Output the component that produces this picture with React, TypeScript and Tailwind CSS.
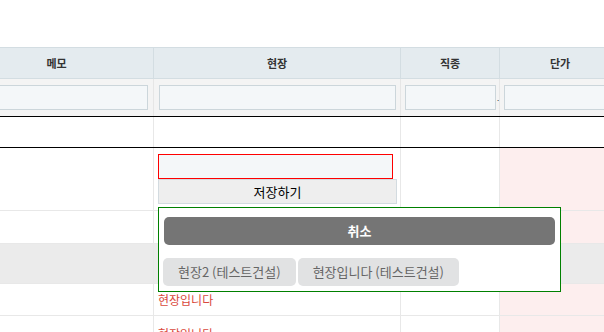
import React, { FC } from "react";

const c1 = "w-[194px] shrink-0 border-r";
const c2 = "w-[247px] shrink-0 border-r";
const c3 = "w-[99px] shrink-0 border-r";
const c4 = "w-[120px] shrink-0";

const FilterInput: FC<{ w: string }> = ({ w }) => (
  <input className={`${w} h-[25px] border border-[#ccd6db] bg-[#f4f7f9] outline-none`} />
);

const SiteText: FC = () => (
  <span className="text-[12px] text-[#d9493c] leading-none">현장입니다</span>
);

const App: FC = () => {
  const sites = ["현장2 (테스트건설)", "현장입니다 (테스트건설)"];

  return (
    <div className="w-[604px] h-[332px] overflow-hidden bg-white font-['Noto_Sans_CJK_KR',sans-serif] text-[#333]">
      <div className="pt-[47px] -ml-[40px] w-[660px]">
        {/* header */}
        <div className="flex h-[32px] border-y border-[#d3dde2] bg-[#e4ebef] text-[11px] font-bold">
          <div className={`${c1} border-[#d3dde2] flex items-center justify-center`}>메모</div>
          <div className={`${c2} border-[#d3dde2] flex items-center justify-center`}>현장</div>
          <div className={`${c3} border-[#d3dde2] flex items-center justify-center`}>직종</div>
          <div className={`${c4} flex items-center justify-center`}>단가</div>
        </div>

        {/* filters */}
        <div className="flex h-[38px] border-b border-black bg-[#f4f4f4]">
          <div className={`${c1} border-[#e6e6e6] flex items-center justify-end pr-[5px]`}>
            <FilterInput w="w-[180px]" />
          </div>
          <div className={`${c2} border-[#e6e6e6] flex items-center pl-[5px]`}>
            <FilterInput w="w-[237px]" />
          </div>
          <div className={`${c3} border-[#e6e6e6] flex items-center pl-[4px]`}>
            <FilterInput w="w-[91px]" />
            <span className="text-[8px] leading-none ml-[1px] mt-[1px]">.</span>
          </div>
          <div className={`${c4} flex items-center pl-[4px]`}>
            <FilterInput w="w-[112px]" />
          </div>
        </div>

        {/* empty row */}
        <div className="flex h-[31px] border-b border-black">
          <div className={`${c1} border-[#e8e8e8]`} />
          <div className={`${c2} border-[#e8e8e8]`} />
          <div className={`${c3} border-[#e8e8e8]`} />
          <div className={c4} />
        </div>

        {/* row 1: editing */}
        <div className="flex h-[63px] border-b border-[#e8e8e8]">
          <div className={`${c1} border-[#e8e8e8]`} />
          <div className={`${c2} border-[#e8e8e8] relative flex flex-col justify-center pl-[4px]`}>
            <input className="w-[235px] h-[25px] border border-[#ff0000] bg-[#f4f7f9] outline-none" />
            <button className="w-[239px] h-[25px] border border-[#d3dbe0] bg-[#eeeeee] text-[13px] text-black">
              저장하기
            </button>
            <div className="absolute z-10 left-[4px] top-[59px] w-[403px] border border-[#008000] bg-white pt-[9px] px-[5px] pb-[5px]">
              <button className="w-full h-[28px] rounded-[5px] bg-[#757575] text-white text-[13px] font-bold">
                취소
              </button>
              <div className="flex gap-[2px] -ml-[1px] mt-[13px]">
                {sites.map((s) => (
                  <button
                    key={s}
                    className="h-[28px] px-[15px] rounded-[5px] bg-[#e1e2e3] text-[13px] text-[#666]"
                  >
                    {s}
                  </button>
                ))}
              </div>
            </div>
          </div>
          <div className={`${c3} border-[#e8e8e8]`} />
          <div className={`${c4} bg-[#fdeeee]`} />
        </div>

        {/* row 2 */}
        <div className="flex h-[33px] border-b border-[#e8e8e8]">
          <div className={`${c1} border-[#e8e8e8]`} />
          <div className={`${c2} border-[#e8e8e8]`} />
          <div className={`${c3} border-[#e8e8e8]`} />
          <div className={`${c4} bg-[#fdeeee]`} />
        </div>

        {/* row 3: highlighted */}
        <div className="flex h-[40px] border-b border-[#e8e8e8] bg-[#ebebeb]">
          <div className={`${c1} border-[#e8e8e8]`} />
          <div className={`${c2} border-[#e8e8e8]`} />
          <div className={`${c3} border-[#e8e8e8]`} />
          <div className={c4} />
        </div>

        {/* row 4 */}
        <div className="flex h-[32px] border-b border-[#e8e8e8]">
          <div className={`${c1} border-[#e8e8e8]`} />
          <div className={`${c2} border-[#e8e8e8] flex items-center pl-[4px]`}>
            <SiteText />
          </div>
          <div className={`${c3} border-[#e8e8e8]`} />
          <div className={`${c4} bg-[#fdeeee]`} />
        </div>

        {/* row 5 */}
        <div className="flex h-[37px] border-b border-[#e8e8e8]">
          <div className={`${c1} border-[#e8e8e8]`} />
          <div className={`${c2} border-[#e8e8e8] flex items-center pl-[4px]`}>
            <SiteText />
          </div>
          <div className={`${c3} border-[#e8e8e8]`} />
          <div className={`${c4} bg-[#fdeeee]`} />
        </div>
      </div>
    </div>
  );
};

export default App;
